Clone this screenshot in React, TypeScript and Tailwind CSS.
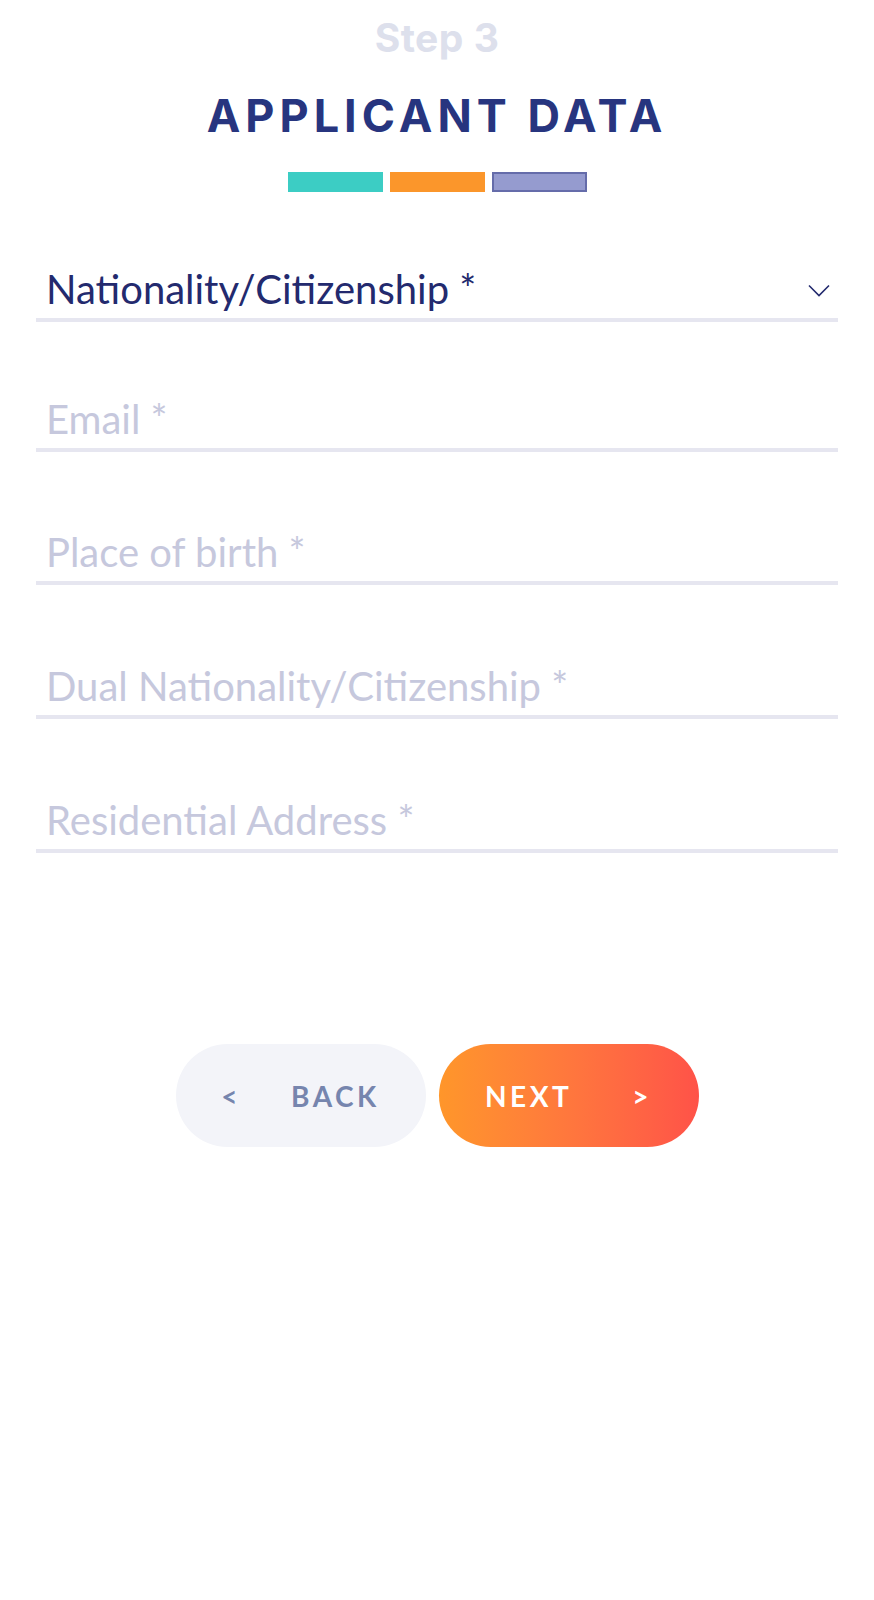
export default function App() {
  const fields = [
    { label: "Email *", mt: "mt-[70px]" },
    { label: "Place of birth *", mt: "mt-[73px]" },
    { label: "Dual Nationality/Citizenship *", mt: "mt-[74px]" },
    { label: "Residential Address *", mt: "mt-[74px]" },
  ];

  return (
    <div className="min-h-[1600px] bg-white px-[36px] font-['Lato',sans-serif]">
      {/* Header */}
      <div className="flex flex-col items-center">
        <div className="mt-[18px] text-[39px] leading-[40px] font-bold tracking-[0.5px] text-[#dde0ec] font-['Inter',sans-serif]">
          Step 3
        </div>
        <h1 className="mt-[33px] text-[45px] leading-[50px] font-bold tracking-[5px] text-[#27357f] font-['Inter',sans-serif]">
          APPLICANT DATA
        </h1>
        <div className="mt-[31px] flex gap-[7px]">
          <div className="h-[20px] w-[95px] bg-[#3ccdc4]" />
          <div className="h-[20px] w-[95px] bg-[#fb962b]" />
          <div className="h-[20px] w-[95px] border-2 border-[#656caa] bg-[#959bcf]" />
        </div>
      </div>

      {/* Select */}
      <div className="mt-[70px] flex h-[60px] items-center justify-between border-b-4 border-[#e6e6f0] pb-[3px] pl-[10px] pr-[8px]">
        <span className="text-[40px] leading-[48px] text-[#232a6e]">
          Nationality/Citizenship *
        </span>
        <svg width="22" height="13" viewBox="0 0 22 13" fill="none" className="mt-[4px]">
          <path d="M1 1.5 L11 11.5 L21 1.5" stroke="#232a6e" strokeWidth="1.6" />
        </svg>
      </div>

      {/* Inputs */}
      {fields.map((f) => (
        <div
          key={f.label}
          className={`${f.mt} flex h-[60px] items-center border-b-4 border-[#e6e6f0] pb-[3px] pl-[10px]`}
        >
          <span className="text-[40px] leading-[48px] text-[#c6c8dd]">{f.label}</span>
        </div>
      ))}

      {/* Buttons */}
      <div className="mt-[191px] flex justify-center gap-[13px]">
        <button className="flex h-[103px] w-[250px] items-center justify-center gap-[50px] rounded-full bg-[#f3f4f9] text-[28px] font-bold tracking-[3.5px] text-[#7685ae]">
          <span>&lt;</span>
          <span>BACK</span>
        </button>
        <button className="flex h-[103px] w-[260px] items-center justify-center gap-[60px] rounded-full bg-gradient-to-r from-[#ff962a] to-[#ff5248] text-[28px] font-bold tracking-[3.5px] text-white">
          <span>NEXT</span>
          <span>&gt;</span>
        </button>
      </div>
    </div>
  );
}
